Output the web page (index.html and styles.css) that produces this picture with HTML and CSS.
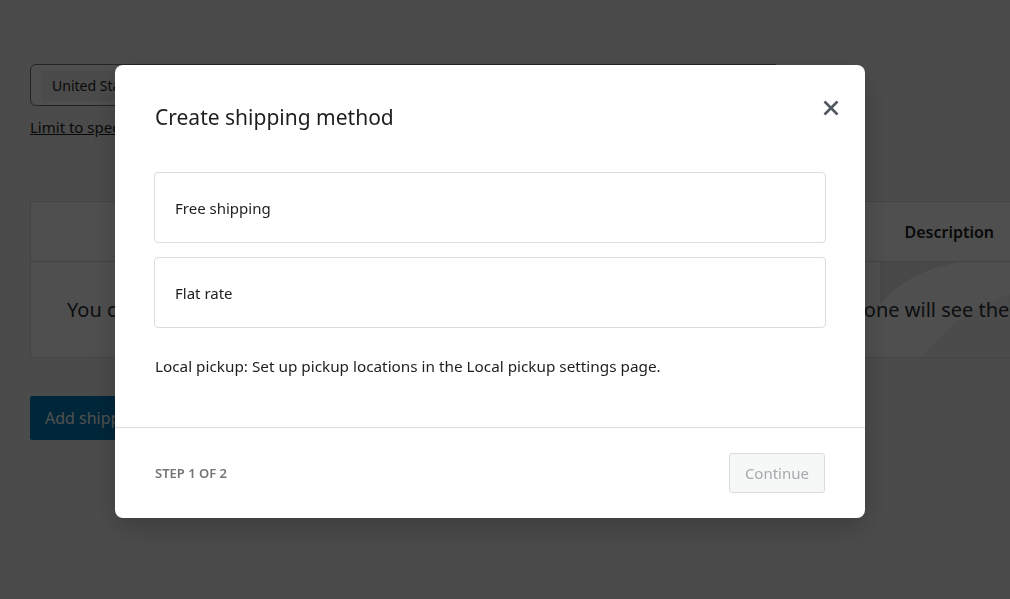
FILE: index.html
```html
<!DOCTYPE html>
<html lang="en">
<head>
  <meta charset="UTF-8" />
  <meta name="viewport" content="width=device-width, initial-scale=1.0"/>
  <title>Shipping zone</title>
  <link rel="stylesheet" href="styles.css">
</head>
<body>
  <div class="page">
    <div class="region-select">
      <span class="token">United States (US)</span>
    </div>
    <a class="limit-link" href="#">Limit to specific ZIP/postcodes</a>

    <div class="methods-table">
      <div class="table-head">
        <span class="col col-title">Title</span>
        <span class="col col-enabled">Enabled</span>
        <span class="col col-desc">Description</span>
      </div>
      <div class="table-empty">
        <svg class="empty-art" width="130" height="96" viewBox="0 0 130 96">
          <path d="M0 0 L80 0 Q30 8 0 42 Z" fill="#e9e9e9"/>
          <path d="M40 96 Q75 48 130 30 L130 96 Z" fill="#f3f3f3"/>
          <path d="M40 96 Q75 48 130 30" stroke="#ffffff" stroke-width="3" fill="none"/>
        </svg>
        <span class="empty-text">You can add multiple shipping methods within this zone. Only customers within the zone will see them.</span>
      </div>
    </div>

    <button class="add-btn">Add shipping method</button>
  </div>

  <div class="overlay">
    <div class="modal">
      <div class="modal-head">
        <h1 class="modal-title">Create shipping method</h1>
        <button class="close-btn" aria-label="Close">
          <svg width="24" height="24" viewBox="0 0 24 24">
            <path d="M5.5 5.5 L18.5 18.5 M18.5 5.5 L5.5 18.5" stroke="#50575e" stroke-width="2.6" fill="none"/>
          </svg>
        </button>
      </div>
      <div class="modal-body">
        <div class="option">Free shipping</div>
        <div class="option">Flat rate</div>
        <p class="pickup-note">Local pickup: Set up pickup locations in the Local pickup settings page.</p>
      </div>
      <div class="modal-foot">
        <span class="step">Step 1 of 2</span>
        <button class="continue-btn" disabled>Continue</button>
      </div>
    </div>
  </div>
</body>
</html>
```

FILE: styles.css
```css
html, body {
  margin: 0;
  height: 100%;
  overflow: hidden;
}

body {
  background: #f0f0f1;
  font-family: 'Noto Sans', 'Open Sans', sans-serif;
  color: #1e1e1e;
}

.page {
  padding: 64px 0 0 30px;
}

.region-select {
  width: 738px;
  height: 40px;
  border: 1px solid #757575;
  border-radius: 6px;
  background: #fff;
  display: flex;
  align-items: center;
  padding-left: 10px;
}

.token {
  background: #f0f0f0;
  font-size: 14px;
  padding: 6px 11px;
  border-radius: 2px;
}

.limit-link {
  display: inline-block;
  margin-top: 11px;
  font-size: 15px;
  color: #1e1e1e;
}

.methods-table {
  margin-top: 63px;
  width: 979px;
  background: #fff;
  border: 1px solid #dcdcde;
  border-right: none;
  overflow: hidden;
}

.table-head {
  height: 59px;
  display: flex;
  align-items: center;
  border-bottom: 1px solid #dcdcde;
  font-weight: 600;
  font-size: 16px;
  white-space: nowrap;
}

.col-title { margin-left: 150px; }
.col-enabled { margin-left: 300px; }
.col-desc { margin-left: 327px; }

.table-empty {
  position: relative;
  height: 95px;
  display: flex;
  align-items: center;
  padding-left: 36px;
  overflow: hidden;
}

.empty-art {
  position: absolute;
  right: 0;
  top: 0;
}

.empty-text {
  position: relative;
  font-size: 20px;
  white-space: nowrap;
  color: #2c3338;
}

.add-btn {
  margin-top: 38px;
  height: 44px;
  padding: 0 15px;
  border: none;
  border-radius: 2px;
  background: #007cba;
  color: #fff;
  font-family: inherit;
  font-size: 16px;
}

.overlay {
  position: fixed;
  inset: 0;
  background: rgba(0, 0, 0, 0.69);
  display: flex;
  justify-content: center;
  align-items: center;
  padding: 0 30px 16px 0;
}

.modal {
  width: 750px;
  background: #fff;
  border-radius: 8px;
  box-shadow: 0 10px 30px rgba(0, 0, 0, 0.2);
}

.modal-head {
  display: flex;
  justify-content: space-between;
  align-items: flex-start;
  padding: 37px 22px 0 40px;
}

.modal-title {
  margin: 0;
  font-size: 21px;
  line-height: 30px;
  font-weight: 400;
}

.close-btn {
  background: none;
  border: none;
  padding: 0;
  width: 24px;
  height: 24px;
  margin-top: -6px;
  cursor: pointer;
}

.modal-body {
  padding: 40px 39px 51px 39px;
  display: flex;
  flex-direction: column;
  gap: 14px;
}

.option {
  box-sizing: border-box;
  border: 1px solid #dcdcde;
  border-radius: 4px;
  height: 71px;
  display: flex;
  align-items: center;
  padding-left: 20px;
  font-size: 15px;
}

.pickup-note {
  margin: 14px 0 0 1px;
  font-size: 15.3px;
}

.modal-foot {
  border-top: 1px solid #e0e0e0;
  display: flex;
  justify-content: space-between;
  align-items: center;
  padding: 25px 40px 25px 40px;
}

.step {
  text-transform: uppercase;
  font-size: 13px;
  font-weight: 600;
  color: #757575;
}

.continue-btn {
  height: 40px;
  padding: 0 15px;
  background: #f6f7f7;
  border: 1px solid #dcdcde;
  border-radius: 3px;
  color: #a7aaad;
  font-family: inherit;
  font-size: 15px;
}
```
